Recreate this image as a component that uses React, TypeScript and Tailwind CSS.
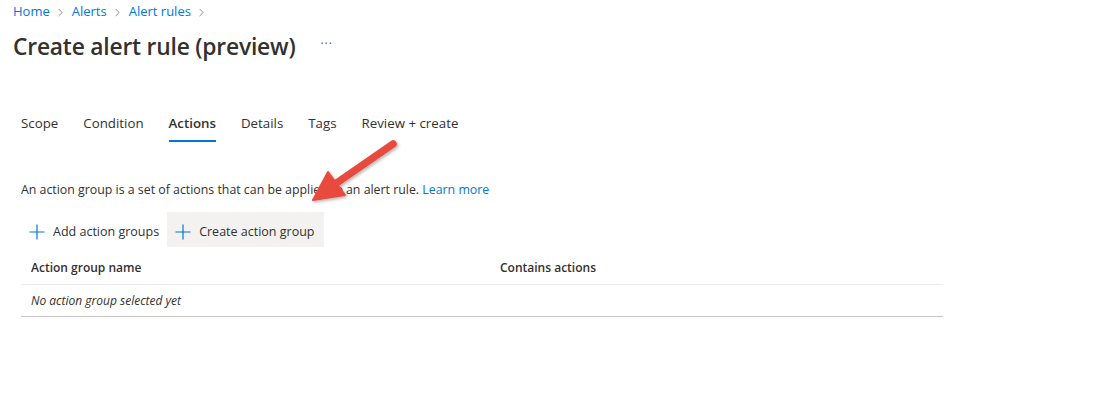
import { ChevronRight } from "lucide-react";

const tabs = ["Scope", "Condition", "Actions", "Details", "Tags", "Review + create"];

function Crumb({ label }: { label: string }) {
  return (
    <span className="flex items-center gap-[4px]">
      <span className="text-[#0078d4]">{label}</span>
      <ChevronRight size={13} strokeWidth={1.25} className="text-[#605e5c]" />
    </span>
  );
}

function PlusIcon() {
  return (
    <svg width="16" height="16" viewBox="0 0 16 16" className="text-[#0078d4]">
      <path d="M8 0.5V15.5M0.5 8H15.5" stroke="currentColor" strokeWidth="1.2" fill="none" />
    </svg>
  );
}

export default function App() {
  return (
    <div
      className="relative w-[1098px] h-[411px] bg-white text-[#323130] overflow-hidden"
      style={{ fontFamily: '"Open Sans", "Noto Sans", sans-serif' }}
    >
      {/* Header */}
      <div className="px-[13px] pt-[2px]">
        <div className="flex items-center gap-[5px] text-[13px] h-[20px]">
          <Crumb label="Home" />
          <Crumb label="Alerts" />
          <Crumb label="Alert rules" />
        </div>
        <div className="flex items-center mt-[10px] h-[30px]">
          <h1 className="text-[22.8px] font-semibold text-[#323130] tracking-[-0.2px]">
            Create alert rule (preview)
          </h1>
          <span className="ml-[25px] text-[12px] text-[#605e5c] tracking-[1px] -mt-[6px]">···</span>
        </div>
      </div>

      {/* Tabs */}
      <div className="flex gap-[25px] px-[21px] mt-[52px] text-[13.3px]">
        {tabs.map((t) => (
          <div key={t} className="flex flex-col">
            <span className={t === "Actions" ? "font-semibold text-[#323130]" : "text-[#323130]"}>{t}</span>
            <span className={t === "Actions" ? "h-[2px] bg-[#0078d4] mt-[6px]" : "h-[2px] mt-[6px]"} />
          </div>
        ))}
      </div>

      {/* Body */}
      <div className="px-[21px]">
        <p className="mt-[39px] text-[12.35px] text-[#323130]">
          An action group is a set of actions that can be applied to an alert rule.{" "}
          <span className="text-[#0078d4]">Learn more</span>
        </p>

        <div className="flex items-center mt-[13px] h-[35px] text-[12.5px]">
          <div className="flex items-center gap-[8px] pl-[8px] pr-[8px] h-full pt-[4px]">
            <PlusIcon />
            <span>Add action groups</span>
          </div>
          <div className="flex items-center gap-[8px] pl-[8px] pr-[9px] h-full pt-[4px] bg-[#f3f2f1]">
            <PlusIcon />
            <span>Create action group</span>
          </div>
        </div>

        <div className="w-[922px] mt-[1px] text-[12px]">
          <div className="flex h-[37px] items-center border-b border-[#edebe9] pl-[10px] pt-[3px] font-semibold">
            <span className="w-[469px]">Action group name</span>
            <span>Contains actions</span>
          </div>
          <div className="flex h-[32px] items-center border-b border-[#c8c6c4] pl-[10px] italic">
            No action group selected yet
          </div>
        </div>
      </div>

      {/* Annotation arrow */}
      <svg className="absolute left-0 top-0 pointer-events-none" width="1098" height="411">
        <defs>
          <filter id="sh" x="-20%" y="-20%" width="140%" height="140%">
            <feDropShadow dx="1.5" dy="1.5" stdDeviation="1.5" floodColor="#000" floodOpacity="0.3" />
          </filter>
        </defs>
        <g filter="url(#sh)" fill="#e84c3d" stroke="#e84c3d" strokeLinecap="round" strokeLinejoin="round">
          <line x1="393" y1="144" x2="338" y2="182" strokeWidth="7.5" />
          <polygon points="313,200 328,172 345,195" strokeWidth="2" />
        </g>
      </svg>
    </div>
  );
}
